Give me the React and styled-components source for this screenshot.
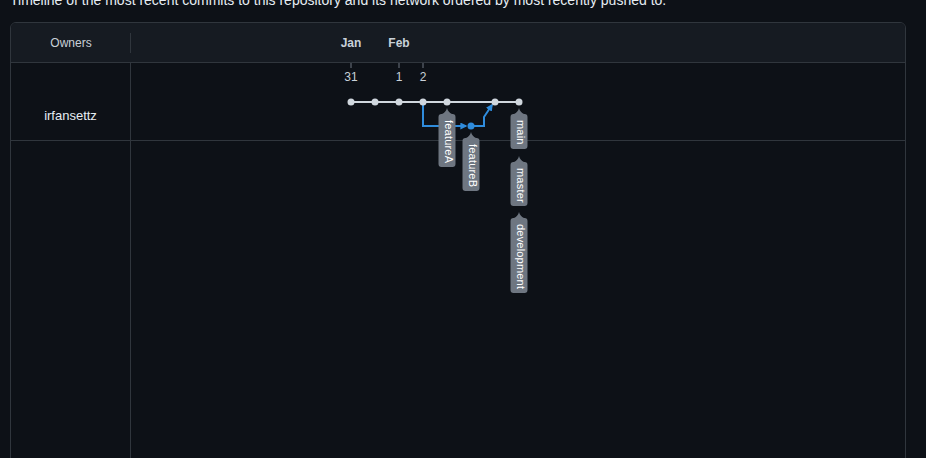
import React from 'react';
import styled, { createGlobalStyle } from 'styled-components';

const GlobalStyle = createGlobalStyle`
  html, body {
    margin: 0;
    padding: 0;
    background: #0d1117;
    overflow: hidden;
  }
  body {
    font-family: "Liberation Sans", Arial, sans-serif;
    color: #e6edf3;
  }
`;

const Page = styled.div`
  padding: 0 20px 0 10px;
`;

const Intro = styled.p`
  margin: -10px 0 11px;
  font-size: 14px;
  line-height: 21px;
  color: #e6edf3;
  white-space: nowrap;
`;

const Network = styled.div`
  border: 1px solid #30363d;
  border-radius: 6px;
  min-height: 520px;
  display: grid;
  grid-template-columns: 120px 1fr;
  grid-template-rows: 40px 78px 1fr;
  overflow: hidden;
`;

const HeadCell = styled.div`
  background: #161b22;
  border-bottom: 1px solid #30363d;
  display: flex;
  align-items: center;
  font-size: 12px;
  position: relative;
`;

const OwnersHead = styled(HeadCell)`
  justify-content: center;
  color: #c9d1d9;

  &::after {
    content: '';
    position: absolute;
    right: 0;
    top: 10px;
    bottom: 9px;
    width: 1px;
    background: #30363d;
  }
`;

const MonthLabel = styled.span`
  position: absolute;
  top: 13px;
  transform: translateX(-50%);
  font-weight: bold;
  color: #c9d1d9;
`;

const OwnerCell = styled.div`
  border-right: 1px solid #30363d;
  border-bottom: ${({ $last }) => ($last ? 'none' : '1px solid #30363d')};
  display: flex;
  justify-content: center;
  align-items: flex-start;
  padding-top: ${({ $last }) => ($last ? '0' : '45px')};
  font-size: 13px;
  color: #e6edf3;
`;

const GraphCell = styled.div`
  border-bottom: ${({ $last }) => ($last ? 'none' : '1px solid #30363d')};
  position: relative;
`;

const GraphLayer = styled.svg`
  position: absolute;
  left: 0;
  top: 0;
  width: 400px;
  height: 260px;
  overflow: visible;
  z-index: 2;
`;

const BLUE = '#2f8cdc';
const ORIGIN = 220;
const STEP = 24;
const MAIN_Y = 39;
const BRANCH_Y = 63;
const cx = (i) => ORIGIN + STEP * i;

const months = [
  { name: 'Jan', at: 0 },
  { name: 'Feb', at: 2 },
];

const days = [
  { label: '31', at: 0 },
  { label: '1', at: 2 },
  { label: '2', at: 3 },
];

const labels = [
  { text: 'featureA', at: 4, tip: 45, len: 53 },
  { text: 'featureB', at: 5, tip: 69, len: 53 },
  { text: 'main', at: 7, tip: 45, len: 35 },
  { text: 'master', at: 7, tip: 93, len: 44 },
  { text: 'development', at: 7, tip: 149, len: 75 },
];

const BranchLabel = ({ text, x, tip, len }) => {
  const top = tip + 6;
  const path = `M${x} ${tip} Q${x + 1} ${tip + 4} ${x + 5} ${top} H${x + 5.5} Q${x + 8.5} ${top} ${x + 8.5} ${top + 3} V${top + len - 3} Q${x + 8.5} ${top + len} ${x + 5.5} ${top + len} H${x - 5.5} Q${x - 8.5} ${top + len} ${x - 8.5} ${top + len - 3} V${top + 3} Q${x - 8.5} ${top} ${x - 5.5} ${top} H${x - 5} Q${x - 1} ${tip + 4} ${x} ${tip} Z`;
  return (
    <g>
      <path d={path} fill="#6e7681" />
      <text
        x={0}
        y={0}
        transform={`translate(${x - 2.5} ${top + 6}) rotate(90)`}
        fill="#ffffff"
        fontSize="11"
        letterSpacing="0.2"
        fontFamily='"Liberation Sans", Arial, sans-serif'
      >
        {text}
      </text>
    </g>
  );
};

const App = () => {
  const mainDots = [0, 1, 2, 3, 4, 6, 7];
  return (
    <Page>
      <GlobalStyle />
      <Intro>
        Timeline of the most recent commits to this repository and its network ordered by most recently pushed to.
      </Intro>
      <Network>
        <OwnersHead>Owners</OwnersHead>
        <HeadCell>
          {months.map((m) => (
            <MonthLabel key={m.name} style={{ left: cx(m.at) }}>
              {m.name}
            </MonthLabel>
          ))}
        </HeadCell>

        <OwnerCell>irfansettz</OwnerCell>
        <GraphCell>
          <GraphLayer viewBox="0 0 400 260">
            <defs>
              <marker id="arrow" viewBox="0 0 10 10" refX="8" refY="5" markerWidth="7" markerHeight="7" orient="auto-start-reverse" markerUnits="userSpaceOnUse">
                <path d="M0 0 L10 5 L0 10 Z" fill={BLUE} />
              </marker>
            </defs>
            {days.map((d) => (
              <g key={d.label}>
                <line x1={cx(d.at)} x2={cx(d.at)} y1={0} y2={5} stroke="#6e7681" strokeWidth="1" />
                <text x={cx(d.at)} y={18} fill="#c9d1d9" fontSize="12" textAnchor="middle" fontFamily='"Liberation Sans", Arial, sans-serif'>
                  {d.label}
                </text>
              </g>
            ))}
            <line x1={cx(0)} x2={cx(7)} y1={MAIN_Y} y2={MAIN_Y} stroke="#d0d7de" strokeWidth="2" />
            <path d={`M${cx(3)} ${MAIN_Y} V${BRANCH_Y} H${cx(5) - 5}`} fill="none" stroke={BLUE} strokeWidth="2" markerEnd="url(#arrow)" />
            <path d={`M${cx(5)} ${BRANCH_Y} H${cx(5) + 13} V${BRANCH_Y - 9} L${cx(6) - 3} ${MAIN_Y + 3}`} fill="none" stroke={BLUE} strokeWidth="2" markerEnd="url(#arrow)" />
            {mainDots.map((i) => (
              <circle key={i} cx={cx(i)} cy={MAIN_Y} r="3.5" fill="#d0d7de" />
            ))}
            <circle cx={cx(5)} cy={BRANCH_Y} r="3.5" fill={BLUE} />
            {labels.map((l) => (
              <BranchLabel key={l.text} text={l.text} x={cx(l.at)} tip={l.tip} len={l.len} />
            ))}
          </GraphLayer>
        </GraphCell>

        <OwnerCell $last />
        <GraphCell $last />
      </Network>
    </Page>
  );
};

export default App;
